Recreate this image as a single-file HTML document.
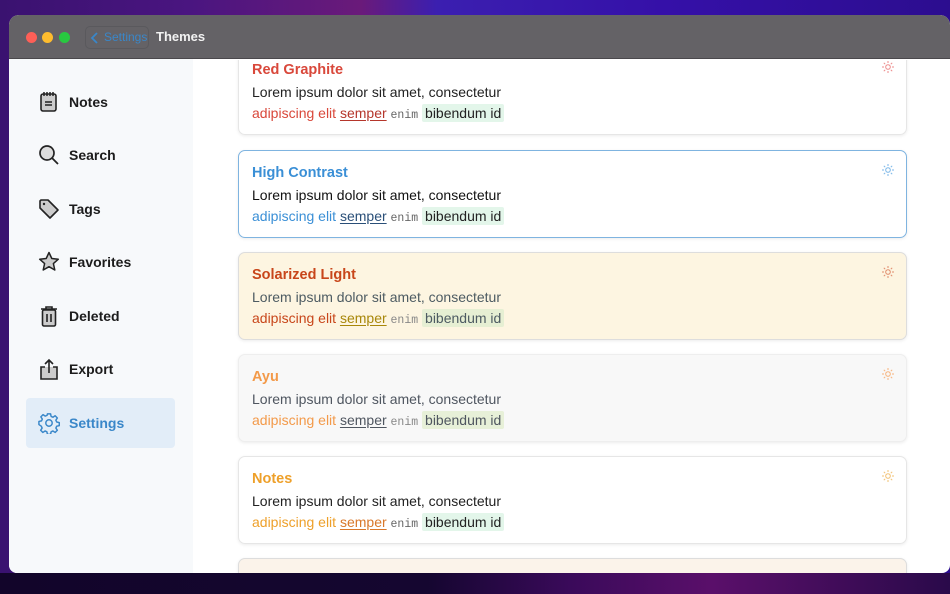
<!DOCTYPE html>
<html><head><meta charset="utf-8"><style>
*{margin:0;padding:0;box-sizing:border-box}
html,body{width:950px;height:594px;overflow:hidden}
body{font-family:"Liberation Sans",sans-serif;
background:linear-gradient(90deg,#3a1270 0%,#4a1580 20%,#6a1a7a 38%,#3b1fb0 46%,#3510a8 70%,#2c0d8f 100%);position:relative}
.bottom{position:absolute;left:0;top:573px;width:950px;height:21px;background:linear-gradient(90deg,#12052a 0%,#150630 45%,#3a0a5a 60%,#5a0f6a 75%,#2a0a4a 100%)}
.win{position:absolute;left:9px;top:15px;width:941px;height:558px;border-radius:10px 10px 8px 8px;overflow:hidden;background:#fff}
.tb{height:44px;background:#646266;position:relative;border-bottom:1px solid #4a484c}
.dot{position:absolute;top:17px;width:11px;height:11px;border-radius:50%}
.back{position:absolute;left:76px;top:11px;width:64px;height:23px;border:1px solid #5a595d;border-radius:5px;color:#3a87c9;font-size:12px;line-height:21px;padding-left:18px}
.back svg{position:absolute;left:4px;top:4px}
.title{position:absolute;left:147px;top:14px;color:#f2f2f2;font-size:13px;font-weight:bold}
.side{position:absolute;left:0;top:44px;width:184px;height:514px;background:#f7f9fb}
.item{position:absolute;left:17px;width:149px;height:50px;font-size:14px;font-weight:bold;color:#1c1c1c;line-height:50px;padding-left:43px;border-radius:4px}
.item svg{position:absolute;left:12px;top:14px}
.item.act{background:#e2edf8;color:#3a87c9}
.content{position:absolute;left:184px;top:45px;width:757px;height:513px;overflow:hidden}
.card{position:absolute;left:45px;width:669px;height:88px;border-radius:7px;border:1px solid #e6e6e6;box-shadow:0 1px 3px rgba(0,0,0,.08);padding:12px 0 0 13px}
.card h3{font-size:14.5px;font-weight:bold;height:22px;line-height:20px}
.card p{font-size:14px;line-height:21px;color:#222}
.u{text-decoration:underline;text-underline-offset:2px}
.m{font-family:"Liberation Mono",monospace;font-size:11.5px;color:#666}
.hl{background:#e3f6ea;padding:1px 3px;border-radius:2px;color:#222}
.sun{position:absolute;right:12px;top:13px}
</style></head><body>
<div class="bottom"></div>
<div class="win">
 <div class="tb">
  <div class="dot" style="left:17px;background:#fe5f57"></div>
  <div class="dot" style="left:33px;background:#febc2e"></div>
  <div class="dot" style="left:50px;background:#28c840"></div>
  <div class="back"><svg width="10" height="14" viewBox="0 0 10 14"><path d="M7 2L2 7l5 5" stroke="#3a87c9" stroke-width="1.8" fill="none"/></svg>Settings</div>
  <div class="title">Themes</div>
 </div>
 <div class="side">
  <div class="item" style="top:18px"><svg width="22" height="22" viewBox="0 0 22 22"><rect x="3" y="3" width="15" height="17" rx="2" fill="#ccc" stroke="#222" stroke-width="1.6"/><path d="M6 1v4M9 1v4M12 1v4M15 1v4M7 11h7M7 14h7" stroke="#222" stroke-width="1.5"/></svg>Notes</div>
  <div class="item" style="top:71px"><svg width="22" height="22" viewBox="0 0 22 22"><circle cx="9" cy="9" r="7" fill="#ddd" stroke="#222" stroke-width="1.7"/><path d="M14 14l6 6" stroke="#222" stroke-width="1.8"/></svg>Search</div>
  <div class="item" style="top:125px"><svg width="22" height="22" viewBox="0 0 22 22"><path d="M2 3v7l10 10 8-8L10 2H3z" fill="#ccc" stroke="#222" stroke-width="1.6" stroke-linejoin="round"/><circle cx="6" cy="6" r="1.2" fill="#222"/></svg>Tags</div>
  <div class="item" style="top:178px"><svg width="22" height="22" viewBox="0 0 22 22"><path d="M11 1.5l2.8 6 6.5.7-4.9 4.4 1.4 6.4L11 15.7l-5.8 3.3 1.4-6.4L1.7 8.2l6.5-.7z" fill="#ccc" stroke="#222" stroke-width="1.5" stroke-linejoin="round"/></svg>Favorites</div>
  <div class="item" style="top:232px"><svg width="22" height="22" viewBox="0 0 22 22"><path d="M3 4h16M8 4V2h6v2" stroke="#222" stroke-width="1.6" fill="none"/><rect x="4.5" y="5" width="13" height="16" rx="1.5" fill="#ccc" stroke="#222" stroke-width="1.6"/><path d="M9 9v8M13 9v8" stroke="#222" stroke-width="1.6"/></svg>Deleted</div>
  <div class="item" style="top:285px"><svg width="22" height="22" viewBox="0 0 22 22"><path d="M7 9H3v12h16V9h-4" fill="#ccc" stroke="#222" stroke-width="1.6"/><path d="M11 15V2M7 6l4-4 4 4" stroke="#222" stroke-width="1.6" fill="none"/></svg>Export</div>
  <div class="item act" style="top:339px"><svg width="22" height="22" viewBox="0 0 24 24"><path d="M10.3 2h3.4l.6 2.8 2 .9 2.4-1.6 2.4 2.4-1.6 2.4.9 2 2.8.6v3.4l-2.8.6-.9 2 1.6 2.4-2.4 2.4-2.4-1.6-2 .9-.6 2.8h-3.4l-.6-2.8-2-.9-2.4 1.6-2.4-2.4 1.6-2.4-.9-2L1 13.7v-3.4l2.8-.6.9-2L3.1 5.3l2.4-2.4 2.4 1.6 2-.9z" fill="none" stroke="#3a87c9" stroke-width="1.6" stroke-linejoin="round"/><circle cx="12" cy="12" r="3.5" fill="none" stroke="#3a87c9" stroke-width="1.6"/></svg>Settings</div>
 </div>
 <div class="content">
 <div class="card" style="top:-13px">
  <svg class="sun" width="12" height="12" viewBox="0 0 12 12" stroke="#ec8a8a" fill="none" stroke-width="1"><circle cx="6" cy="6" r="2.3"/><path d="M6 0v2M6 10v2M0 6h2M10 6h2M1.8 1.8l1.4 1.4M8.8 8.8l1.4 1.4M1.8 10.2l1.4-1.4M8.8 3.2l1.4-1.4"/></svg>
  <h3 style="color:#d9483b">Red Graphite</h3>
  <p>Lorem ipsum dolor sit amet, consectetur</p>
  <p><span style="color:#d9483b">adipiscing elit</span> <span class="u" style="color:#b5362b">semper</span> <span class="m">enim</span> <span class="hl">bibendum id</span></p>
 </div>
 <div class="card" style="top:90px;border-color:#7fb4e0">
  <svg class="sun" width="12" height="12" viewBox="0 0 12 12" stroke="#7ab6e8" fill="none" stroke-width="1"><circle cx="6" cy="6" r="2.3"/><path d="M6 0v2M6 10v2M0 6h2M10 6h2M1.8 1.8l1.4 1.4M8.8 8.8l1.4 1.4M1.8 10.2l1.4-1.4M8.8 3.2l1.4-1.4"/></svg>
  <h3 style="color:#3a8fd6">High Contrast</h3>
  <p style="color:#111">Lorem ipsum dolor sit amet, consectetur</p>
  <p><span style="color:#3a8fd6">adipiscing elit</span> <span class="u" style="color:#2a4f78">semper</span> <span class="m">enim</span> <span class="hl">bibendum id</span></p>
 </div>
 <div class="card" style="top:192px;background:#fdf5e1;border-color:#ddd">
  <svg class="sun" width="12" height="12" viewBox="0 0 12 12" stroke="#e08a6a" fill="none" stroke-width="1"><circle cx="6" cy="6" r="2.3"/><path d="M6 0v2M6 10v2M0 6h2M10 6h2M1.8 1.8l1.4 1.4M8.8 8.8l1.4 1.4M1.8 10.2l1.4-1.4M8.8 3.2l1.4-1.4"/></svg>
  <h3 style="color:#c8461a">Solarized Light</h3>
  <p style="color:#4d5b62">Lorem ipsum dolor sit amet, consectetur</p>
  <p><span style="color:#c8461a">adipiscing elit</span> <span class="u" style="color:#a8870a">semper</span> <span class="m" style="color:#888">enim</span> <span class="hl" style="background:#e6efd3;color:#4d5b62">bibendum id</span></p>
 </div>
 <div class="card" style="top:294px;background:#f8f8f8;border-color:#eee">
  <svg class="sun" width="12" height="12" viewBox="0 0 12 12" stroke="#f7b27a" fill="none" stroke-width="1"><circle cx="6" cy="6" r="2.3"/><path d="M6 0v2M6 10v2M0 6h2M10 6h2M1.8 1.8l1.4 1.4M8.8 8.8l1.4 1.4M1.8 10.2l1.4-1.4M8.8 3.2l1.4-1.4"/></svg>
  <h3 style="color:#f39a4a">Ayu</h3>
  <p style="color:#4f5660">Lorem ipsum dolor sit amet, consectetur</p>
  <p><span style="color:#f39a4a">adipiscing elit</span> <span class="u" style="color:#4f5660">semper</span> <span class="m" style="color:#888">enim</span> <span class="hl" style="background:#e7f0d8;color:#4f5660">bibendum id</span></p>
 </div>
 <div class="card" style="top:396px">
  <svg class="sun" width="12" height="12" viewBox="0 0 12 12" stroke="#f2c070" fill="none" stroke-width="1"><circle cx="6" cy="6" r="2.3"/><path d="M6 0v2M6 10v2M0 6h2M10 6h2M1.8 1.8l1.4 1.4M8.8 8.8l1.4 1.4M1.8 10.2l1.4-1.4M8.8 3.2l1.4-1.4"/></svg>
  <h3 style="color:#eea02a">Notes</h3>
  <p>Lorem ipsum dolor sit amet, consectetur</p>
  <p><span style="color:#eea02a">adipiscing elit</span> <span class="u" style="color:#d9782a">semper</span> <span class="m">enim</span> <span class="hl">bibendum id</span></p>
 </div>
 <div class="card" style="top:498px;background:#fbf3ea;border-color:#ddd"></div>
 </div>
</div>
</body></html>
